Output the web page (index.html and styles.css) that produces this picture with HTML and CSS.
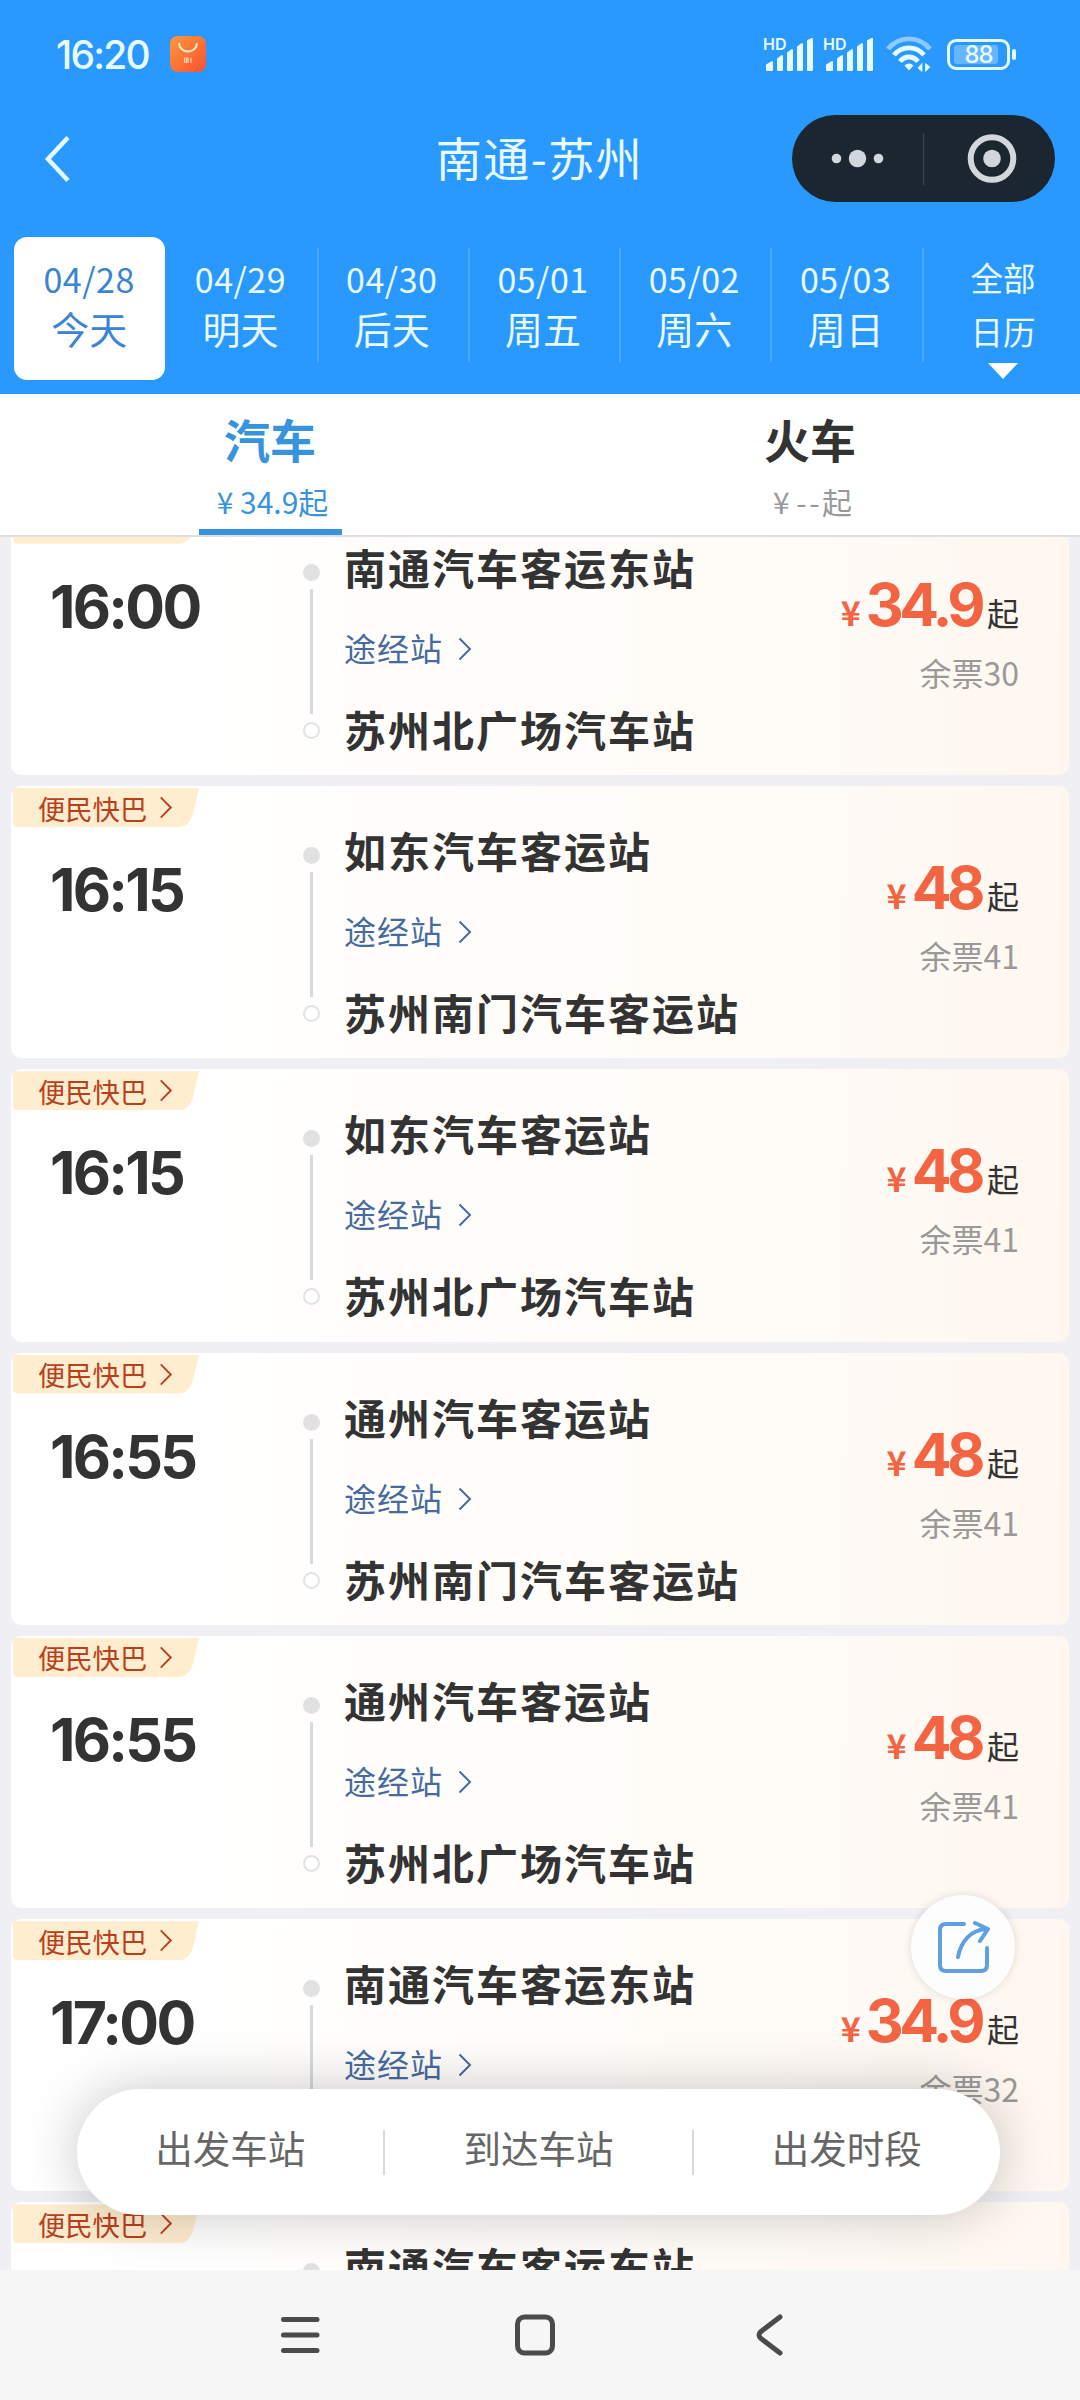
FILE: index.html
```html
<!DOCTYPE html>
<html lang="zh-CN">
<head>
    <meta charset="UTF-8">
    <meta name="viewport" content="width=device-width, initial-scale=1.0">
    <title>南通-苏州</title>
    <link rel="stylesheet" href="styles.css">
</head>
<body>

    <!-- Header -->
    <header>
        <div class="status-bar">
            <span class="clock">16:20</span>
            <svg class="app-icon" width="36" height="36" viewBox="0 0 36 36">
                <defs>
                    <linearGradient id="mi" x1="0" y1="0" x2="1" y2="1">
                        <stop offset="0" stop-color="#fb9a3c"/>
                        <stop offset="1" stop-color="#fb4f30"/>
                    </linearGradient>
                </defs>
                <rect width="36" height="36" rx="8" fill="url(#mi)"/>
                <path d="M9 7a9 8.5 0 0 0 18 0" fill="none" stroke="#ffe9c8" stroke-width="2"/>
                <path d="M14.500 27v-5h3.500v5M16.500 23v4M21 22v5" fill="none" stroke="#ffd9b0" stroke-width="1.200"/>
            </svg>
            <div class="status-icons">
                <div class="signal">
                    <span>HD</span>
                    <svg width="50" height="34" viewBox="0 0 50 34"><path d="M2 28l5-3v8H2zM13 22l4-3v14h-4zM23 16l4-3v20h-4zM33 10l4-3v26h-4zM43 4l4-2v31h-4z" fill="#e4fbff" stroke="#e4fbff" stroke-width="2" stroke-linejoin="round"/></svg>
                </div>
                <div class="signal">
                    <span>HD</span>
                    <svg width="50" height="34" viewBox="0 0 50 34"><path d="M2 28l5-3v8H2zM13 22l4-3v14h-4zM23 16l4-3v20h-4zM33 10l4-3v26h-4zM43 4l4-2v31h-4z" fill="#e4fbff" stroke="#e4fbff" stroke-width="2" stroke-linejoin="round"/></svg>
                </div>
                <svg class="wifi" width="46" height="36" viewBox="0 0 46 36">
                    <g fill="none" stroke="#e4fbff" stroke-width="4.800">
                        <path d="M2 13C13-.5 33-.5 44 13" stroke="#8ccaff"/>
                        <path d="M8 19C16 9.500 30 9.500 38 19"/>
                        <path d="M14 25.500C19 19.500 27 19.500 32 25.500"/>
                    </g>
                    <path d="M18.500 29.500q4.500-4 9 0L23 34.500z" fill="#e4fbff"/>
                    <path d="M36 27.500v8l-4-3.500zM39.500 35.500v-8l4.500 3.500z" fill="#e4fbff" stroke="#e4fbff" stroke-width=".8"/>
                </svg>
                <div class="battery"><span>88</span></div>
            </div>
        </div>

        <div class="title-bar">
            <svg class="back" width="28" height="48" viewBox="0 0 28 48"><path d="M25 2.500L5 24l20 21.500" fill="none" stroke="#e4fbff" stroke-width="4.500"/></svg>
            <h1>南通-苏州</h1>
            <div class="capsule">
                <svg width="263" height="87" viewBox="0 0 263 87">
                    <g fill="#d3d6dc">
                        <circle cx="44.500" cy="43.500" r="4.800"/>
                        <circle cx="65.500" cy="43.500" r="8.700"/>
                        <circle cx="86.500" cy="43.500" r="4.800"/>
                        <circle cx="200" cy="43.500" r="8.800"/>
                    </g>
                    <path d="M131.500 18v52" stroke="#36404a" stroke-width="1.500"/>
                    <circle cx="200" cy="43.500" r="21.300" fill="none" stroke="#d3d6dc" stroke-width="6"/>
                </svg>
            </div>
        </div>

        <div class="dates">
            <div class="date active"><span>04/28</span><b>今天</b></div>
            <div class="date"><span>04/29</span><b>明天</b></div>
            <div class="date"><span>04/30</span><b>后天</b></div>
            <div class="date"><span>05/01</span><b>周五</b></div>
            <div class="date"><span>05/02</span><b>周六</b></div>
            <div class="date"><span>05/03</span><b>周日</b></div>
            <div class="calendar"><span>全部</span><span>日历</span><i></i></div>
        </div>
    </header>

    <!-- Tabs -->
    <nav class="tabs">
        <div class="tab active"><b>汽车</b><span>¥ 34.9起</span></div>
        <div class="tab"><b>火车</b><span>¥ <em>--</em>起</span></div>
    </nav>

    <!-- Bus list -->
    <main class="list" id="list"></main>

    <!-- Share button -->
    <div class="share">
        <svg width="54" height="54" viewBox="0 0 54 54" fill="none" stroke="#5f9fe2" stroke-width="4" stroke-linecap="round" stroke-linejoin="round">
            <path d="M28 4H10q-6 0-6 6v35q0 6 6 6h35q6 0 6-6V28"/>
            <path d="M22 37C25 21 35 10 50 9M39 3l13 6-8 12"/>
        </svg>
    </div>

    <!-- Filter -->
    <div class="filter">
        <span>出发车站</span>
        <span>到达车站</span>
        <span>出发时段</span>
    </div>

    <!-- System navigation -->
    <footer>
        <svg width="1080" height="130" viewBox="0 0 1080 130" fill="none" stroke="#4b4b4b" stroke-width="5" stroke-linecap="round" stroke-linejoin="round">
            <path d="M283.500 49.500h33.500M283.500 65h33.500M283.500 80.500h33.500"/>
            <rect x="517.500" y="47" width="35" height="36" rx="7"/>
            <path d="M780 47L761 61.500q-4 3.500 0 7L780 83"/>
        </svg>
    </footer>

    <script>
        const buses = [
            { time: '16:00', from: '南通汽车客运东站', to: '苏州北广场汽车站', price: '34.9', left: 30 },
            { time: '16:15', from: '如东汽车客运站', to: '苏州南门汽车客运站', price: '48', left: 41 },
            { time: '16:15', from: '如东汽车客运站', to: '苏州北广场汽车站', price: '48', left: 41 },
            { time: '16:55', from: '通州汽车客运站', to: '苏州南门汽车客运站', price: '48', left: 41 },
            { time: '16:55', from: '通州汽车客运站', to: '苏州北广场汽车站', price: '48', left: 41 },
            { time: '17:00', from: '南通汽车客运东站', to: '', price: '34.9', left: 32 },
            { time: '', from: '南通汽车客运东站', to: '', price: '', left: '' }
        ];

        const arrow = '<svg class="arrow" width="14" height="24" viewBox="0 0 14 24"><path d="M1.500 1.500L12 12 1.500 22.500" fill="none" stroke="currentColor" stroke-width="2"/></svg>';

        // Build one card per bus
        const list = document.getElementById('list');
        buses.forEach((bus, i) => {
            const card = document.createElement('div');
            card.className = 'card';
            card.innerHTML = `
                <div class="tag">${i > 0 ? '便民快巴' + arrow : ''}</div>
                <div class="card-body">
                    <div class="time">${bus.time}</div>
                    <div class="line"><i class="dot"></i><i class="bar"></i><i class="ring"></i></div>
                    <div class="stations">
                        <h3>${bus.from}</h3>
                        ${bus.time ? `<p>途经站${arrow}</p>` : ''}
                        <h3>${bus.to}</h3>
                    </div>
                    ${bus.price ? `<div class="price">
                        <div class="amount"><small>¥</small><strong>${bus.price}</strong><span>起</span></div>
                        <div class="left">余票${bus.left}</div>
                    </div>` : ''}
                </div>
            `;
            list.appendChild(card);
        });
    </script>

</body>
</html>
```

FILE: styles.css
```css
/* General Styles */
* {
    margin: 0;
    padding: 0;
    box-sizing: border-box;
}
body {
    width: 1080px;
    height: 2400px;
    position: relative;
    overflow: hidden;
    display: flex;
    flex-direction: column;
    background: #efeff4;
    color: #333;
    font-family: "Noto Sans CJK SC", sans-serif;
}
svg {
    display: block;
    flex-shrink: 0;
}
b {
    font-weight: normal;
}

/* Header */
header {
    height: 394px;
    flex-shrink: 0;
    background: #2998ff;
    color: #e8fbff;
}
.status-bar {
    height: 108px;
    padding: 0 62px 0 56px;
    display: flex;
    align-items: center;
}
.clock {
    width: 114px;
    font-family: Inter, sans-serif;
    font-size: 39px;
    font-weight: 500;
    letter-spacing: -1.8px;
}
.status-icons {
    margin-left: auto;
    display: flex;
    align-items: center;
}
.signal {
    width: 60px;
    height: 34px;
    position: relative;
}
.signal span {
    position: absolute;
    left: -2px;
    top: -1px;
    font-family: Inter, sans-serif;
    font-size: 16px;
    line-height: 16px;
    font-weight: 600;
}
.wifi {
    margin-left: 1px;
}
.battery {
    width: 63px;
    height: 31px;
    margin-left: 15px;
    margin-right: 8px;
    border: 3px solid #e4fbff;
    border-radius: 9px;
    position: relative;
    padding: 3px 10px 3px 4px;
}
.battery span {
    display: block;
    width: 44px;
    height: 19px;
    background: #66b5ff;
    border-radius: 3px;
    font-family: Inter, sans-serif;
    font-size: 24px;
    line-height: 19px;
    font-weight: 500;
    text-align: center;
    letter-spacing: -1px;
    padding-left: 5px;
}
.battery::after {
    content: "";
    position: absolute;
    right: -9px;
    top: 7px;
    width: 4px;
    height: 11px;
    border-radius: 2px;
    background: #e4fbff;
}
.title-bar {
    height: 101px;
    padding: 0 25px 0 43px;
    display: flex;
    align-items: center;
    justify-content: space-between;
}
.title-bar h1 {
    font-size: 46px;
    line-height: 60px;
    font-weight: normal;
    letter-spacing: 1.5px;
    margin-left: 216px;
    padding-bottom: 6px;
}
.capsule {
    height: 87px;
    border-radius: 44px;
    background: #1c2630;
}

/* Dates */
.dates {
    margin-top: 28px;
    padding-left: 14px;
    display: flex;
}
.date {
    width: 151.300px;
    height: 143px;
    padding-top: 22px;
    display: flex;
    flex-direction: column;
    align-items: center;
    position: relative;
}
.date span {
    font-size: 34px;
    line-height: 40px;
    letter-spacing: 0.5px;
    padding-right: 1px;
}
.date b {
    font-size: 38px;
    line-height: 50px;
    margin-top: 4px;
    padding-right: 1px;
}
.date.active {
    background: #fff;
    border-radius: 13px;
    color: #3a84d2;
}
.date:not(.active)::after {
    content: "";
    position: absolute;
    right: -2px;
    top: 11px;
    width: 2px;
    height: 114px;
    background: #48a7ff;
}
.calendar {
    flex: 1;
    margin-left: 4px;
    padding-top: 13px;
    display: flex;
    flex-direction: column;
    align-items: center;
    font-size: 32.500px;
    line-height: 54px;
}
.calendar i {
    margin-top: 5px;
    border: 15px solid transparent;
    border-top: 16px solid #fff;
    border-bottom: none;
}

/* Tabs */
.tabs {
    height: 143px;
    flex-shrink: 0;
    display: flex;
    background: #fff;
    border-bottom: 2px solid #dfe0e2;
}
.tab {
    width: 540px;
    padding-top: 15px;
    display: flex;
    flex-direction: column;
    align-items: center;
    position: relative;
}
.tab b {
    font-size: 46px;
    line-height: 58px;
    font-weight: bold;
}
.tab span {
    font-size: 30px;
    line-height: 40px;
    margin-top: 14px;
    padding-left: 5px;
    color: #999;
}
.tab em {
    font-style: normal;
    letter-spacing: 2.500px;
}
.tab.active b,
.tab.active span {
    color: #3793dd;
}
.tab.active::after {
    content: "";
    position: absolute;
    bottom: 0;
    width: 143px;
    height: 6px;
    background: #3793dd;
}

/* Bus list */
.list {
    flex: 1;
    min-height: 0;
    overflow: hidden;
    padding: 0 11px;
}
.card {
    height: 272.300px;
    margin-bottom: 11px;
    padding: 2px 0 0 2px;
    border-radius: 10px;
    background: linear-gradient(92deg, #fff 10%, #fffdfa 50%, #fffaf5 80%, #fff7ef 100%);
}
.card:first-child {
    margin-top: -34.300px;
}
.tag {
    width: 186px;
    height: 39px;
    padding-left: 25px;
    display: flex;
    align-items: center;
    background: #ffedcf;
    clip-path: path("M0 0H186L180 26Q176 39 165 39H5Q0 39 0 34Z");
    color: #b9401c;
    font-size: 27.300px;
    line-height: 36px;
}
.tag .arrow {
    margin-left: 12px;
    height: 23px;
}
.card-body {
    display: flex;
    padding: 0 50px 0 37px;
}
.time {
    width: 240px;
    margin-top: 33px;
    font-family: Inter, sans-serif;
    font-size: 59px;
    line-height: 60px;
    font-weight: 700;
    letter-spacing: -2.700px;
}
.line {
    width: 42px;
    margin-left: 13px;
    padding-top: 20px;
    display: flex;
    flex-direction: column;
}
.line i {
    width: 17px;
    height: 17px;
    border-radius: 50%;
}
.line .dot {
    background: #e1e1e1;
}
.line .bar {
    width: 3px;
    height: 125px;
    margin: 8px 0 8px 7px;
    border-radius: 0;
    background: #d7d9de;
}
.line .ring {
    border: 2px solid #e3e3e3;
    background: #fff;
}
.stations {
    flex: 1;
    margin-top: -2px;
}
.stations h3 {
    height: 50px;
    margin-left: -1px;
    font-size: 42px;
    line-height: 50px;
    letter-spacing: 2px;
    white-space: nowrap;
}
.stations p {
    margin: 35px 0 37px -1px;
    display: flex;
    align-items: center;
    font-size: 32px;
    line-height: 40px;
    letter-spacing: 1px;
    color: #476b9f;
}
.stations .arrow {
    margin-left: 15px;
    position: relative;
    top: 2px;
}
.price {
    text-align: right;
    margin-top: 31px;
}
.amount {
    display: flex;
    justify-content: flex-end;
    align-items: baseline;
    height: 60px;
    line-height: 60px;
    color: #f36442;
}
.amount small {
    font-size: 34px;
    font-weight: bold;
    margin-right: 5px;
}
.amount strong {
    font-family: Inter, sans-serif;
    font-size: 59px;
    letter-spacing: -4.500px;
}
.amount span {
    font-size: 32px;
    margin-left: 6px;
    color: #333;
}
.left {
    margin-top: 17px;
    font-size: 32px;
    line-height: 40px;
    color: #999;
}

/* Share button */
.share {
    position: absolute;
    left: 911px;
    top: 1895px;
    width: 104px;
    height: 104px;
    border-radius: 50%;
    background: #fdfdfe;
    box-shadow: 0 0 10px rgba(0, 0, 0, 0.13);
    display: flex;
    align-items: center;
    justify-content: center;
}

/* Filter */
.filter {
    position: absolute;
    left: 77px;
    top: 2089px;
    width: 923px;
    height: 126px;
    border-radius: 63px;
    background: #fff;
    box-shadow: 0 0 56px rgba(0, 0, 0, 0.22);
    display: flex;
    align-items: center;
}
.filter span {
    flex: 1;
    text-align: center;
    font-size: 37.500px;
    line-height: 34px;
    padding-bottom: 11px;
    color: #666;
}
.filter span + span {
    border-left: 2px solid #d9d9d9;
}

/* System navigation */
footer {
    height: 130px;
    flex-shrink: 0;
    position: relative;
    background: #f6f6f6;
}
```
